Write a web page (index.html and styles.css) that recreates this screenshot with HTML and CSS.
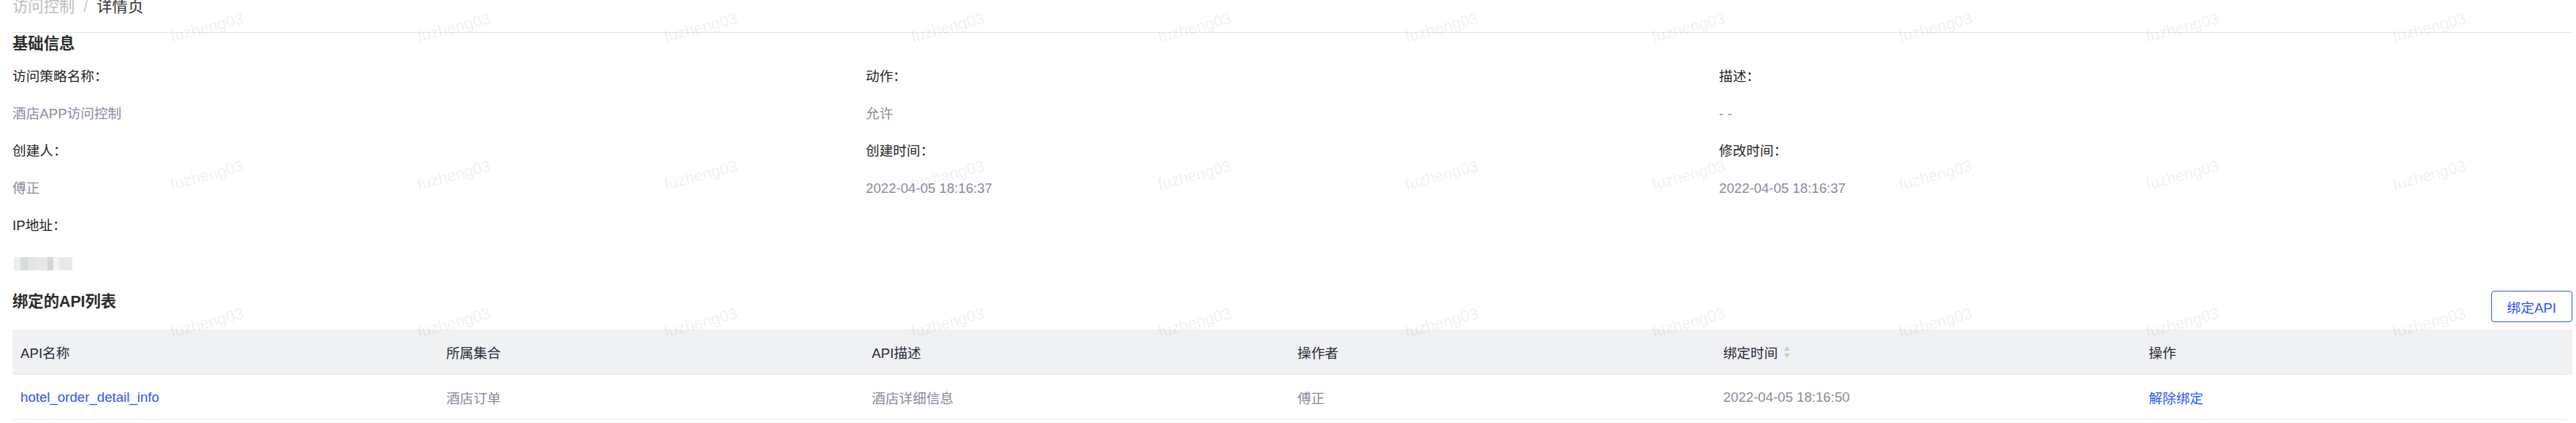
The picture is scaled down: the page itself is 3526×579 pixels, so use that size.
FILE: index.html
```html
<!DOCTYPE html>
<html lang="zh-CN">

<head>
    <meta charset="UTF-8">
    <meta name="viewport" content="width=device-width, initial-scale=1.0">
    <title>访问控制 - 详情页</title>
    <link rel="stylesheet" href="styles.css">
</head>

<body>
    <div class="page">
        <div class="breadcrumb">
            <span class="crumb-link">访问控制</span><span class="crumb-sep">/</span><span class="crumb-current">详情页</span>
        </div>

        <h2 class="section-title">基础信息</h2>
        <div class="info-grid">
            <div class="field">
                <div class="field-label">访问策略名称：</div>
                <div class="field-value">酒店APP访问控制</div>
            </div>
            <div class="field">
                <div class="field-label">动作：</div>
                <div class="field-value">允许</div>
            </div>
            <div class="field">
                <div class="field-label">描述：</div>
                <div class="field-value">- -</div>
            </div>
            <div class="field">
                <div class="field-label">创建人：</div>
                <div class="field-value">傅正</div>
            </div>
            <div class="field">
                <div class="field-label">创建时间：</div>
                <div class="field-value">2022-04-05 18:16:37</div>
            </div>
            <div class="field">
                <div class="field-label">修改时间：</div>
                <div class="field-value">2022-04-05 18:16:37</div>
            </div>
            <div class="field">
                <div class="field-label">IP地址：</div>
                <div class="field-value"><span class="masked"></span></div>
            </div>
        </div>

        <div class="section-head">
            <h2 class="section-title">绑定的API列表</h2>
            <button class="btn-outline" type="button">绑定API</button>
        </div>

        <div class="table">
            <div class="table-head">
                <div class="row">
                    <div class="cell">API名称</div>
                    <div class="cell">所属集合</div>
                    <div class="cell">API描述</div>
                    <div class="cell">操作者</div>
                    <div class="cell">绑定时间
                        <svg class="sorter" width="10" height="18" viewBox="0 0 10 18">
                            <path d="M5 1 L9 7 L1 7 Z" fill="#c8cbd1" />
                            <path d="M1 11 L9 11 L5 17 Z" fill="#c8cbd1" />
                        </svg>
                    </div>
                    <div class="cell">操作</div>
                </div>
            </div>
            <div class="table-body">
                <div class="row">
                    <div class="cell"><a class="link" href="#">hotel_order_detail_info</a></div>
                    <div class="cell muted">酒店订单</div>
                    <div class="cell muted">酒店详细信息</div>
                    <div class="cell muted">傅正</div>
                    <div class="cell muted">2022-04-05 18:16:50</div>
                    <div class="cell"><a class="link" href="#">解除绑定</a></div>
                </div>
            </div>
        </div>
    </div>

    <div class="watermark">
        <span>fuzheng03</span><span>fuzheng03</span><span>fuzheng03</span><span>fuzheng03</span><span>fuzheng03</span>
        <span>fuzheng03</span><span>fuzheng03</span><span>fuzheng03</span><span>fuzheng03</span><span>fuzheng03</span>
        <span>fuzheng03</span><span>fuzheng03</span><span>fuzheng03</span><span>fuzheng03</span><span>fuzheng03</span>
        <span>fuzheng03</span><span>fuzheng03</span><span>fuzheng03</span><span>fuzheng03</span><span>fuzheng03</span>
        <span>fuzheng03</span><span>fuzheng03</span><span>fuzheng03</span><span>fuzheng03</span><span>fuzheng03</span>
        <span>fuzheng03</span><span>fuzheng03</span><span>fuzheng03</span><span>fuzheng03</span><span>fuzheng03</span>
    </div>
</body>

</html>
```

FILE: styles.css
```css
body {
    font-family: 'Liberation Sans', 'Noto Sans CJK SC', sans-serif;
    margin: 0;
    padding: 0;
    background-color: #fff;
    color: #1f2329;
    font-size: 18.67px;
    overflow: hidden;
}

.page {
    padding: 0 5px 0 17px;
}

.breadcrumb {
    margin-top: -5px;
    line-height: 28px;
    font-size: 21.33px;
    padding-bottom: 21px;
    border-bottom: 1px solid #e4e4e4;
}

.crumb-link {
    color: #bdbdbd;
}

.crumb-sep {
    color: #c8c8c8;
    padding: 0 12px;
}

.crumb-current {
    color: #333;
}

.section-title {
    margin: 0;
    font-size: 21.33px;
    line-height: 30px;
    font-weight: bold;
    color: #2b2b2b;
}

.info-grid {
    display: grid;
    grid-template-columns: repeat(3, 1fr);
    margin-top: 17px;
}

.field {
    margin-bottom: 25px;
}

.field-label {
    line-height: 26px;
    margin-bottom: 25px;
    color: #1f2329;
}

.field-value {
    line-height: 26px;
    height: 26px;
    color: #878ca0;
}

.masked {
    display: inline-block;
    vertical-align: middle;
    width: 80px;
    height: 18px;
    margin-left: 2px;
    background:
        linear-gradient(90deg, #eeeef2 0 9px, #d9dbe3 9px 19px, #e3e4ea 19px 28px, #e6e7ec 28px 46px, #d3d5dd 46px 54px, #f3f3f5 54px 62px, #e8e8ed 62px 80px);
}

.section-head {
    display: flex;
    justify-content: space-between;
    align-items: flex-start;
}

.btn-outline {
    font-family: 'Liberation Sans', 'Noto Sans CJK SC', sans-serif;
    font-size: 18.67px;
    height: 43px;
    padding: 0 21px;
    background: #fff;
    color: #2b55ff;
    border: 1px solid #2b55ff;
    border-radius: 4px;
    cursor: pointer;
}

.table {
    margin-top: 10px;
}

.table-head {
    background-color: #f0f1f3;
    padding-right: 8px;
}

.table-body {
    margin-right: 8px;
}

.row {
    display: grid;
    grid-template-columns: repeat(6, 1fr);
    height: 61px;
}

.table-head .row {
    border-bottom: 1px solid #e2e4ea;
    color: #262a36;
}

.table-body .row {
    border-bottom: 1px solid #e8e8e8;
}

.cell {
    display: flex;
    align-items: center;
    padding: 0 11px;
}

.muted {
    color: #878ca0;
}

.link {
    color: #2b55ff;
    text-decoration: none;
}

.sorter {
    margin-left: 8px;
}

.watermark {
    position: fixed;
    top: -63px;
    left: 114px;
    display: grid;
    grid-template-columns: repeat(10, 338px);
    grid-auto-rows: 202px;
    pointer-events: none;
}

.watermark span {
    place-self: center;
    transform: rotate(-15deg);
    font-family: 'Liberation Sans', sans-serif;
    font-size: 22px;
    color: rgba(0, 0, 0, 0.06);
    white-space: nowrap;
}
```
